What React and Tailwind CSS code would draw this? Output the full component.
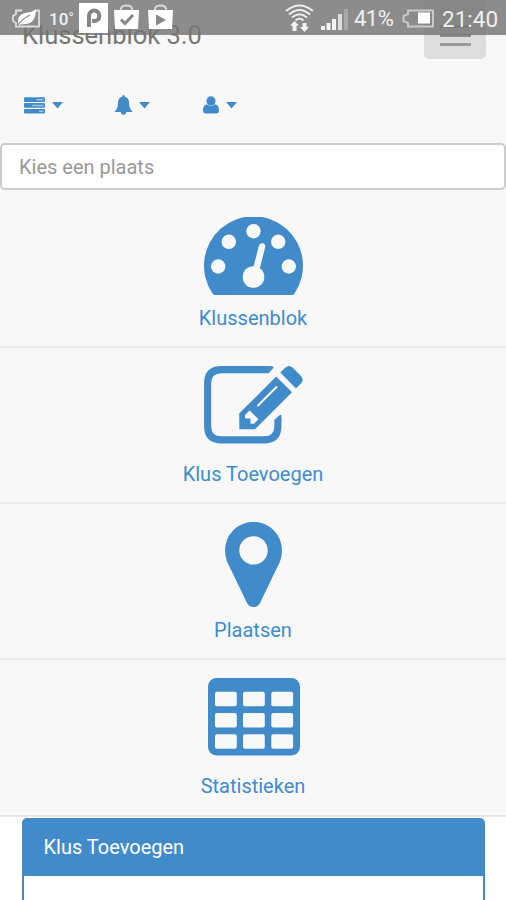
import React from "react";

const menuItems = [
  { label: "Klussenblok", icon: GaugeIcon },
  { label: "Klus Toevoegen", icon: EditIcon },
  { label: "Plaatsen", icon: PinIcon },
  { label: "Statistieken", icon: TableIcon },
];

const dropdowns = [
  { name: "Taken", icon: TasksIcon },
  { name: "Meldingen", icon: BellIcon },
  { name: "Gebruiker", icon: UserIcon },
];

function GaugeIcon() {
  return (
    <svg className="mt-[7px]" width="99" height="78" viewBox="0 0 99 78">
      <path d="M11 78Q9.5 78 8.5 76.5A49.5 49.5 0 1 1 90.5 76.5Q89.5 78 88 78Z" fill="currentColor" />
      <g fill="#f8f8f8">
        <circle cx="14.2" cy="49.5" r="7.2" />
        <circle cx="24.8" cy="24.8" r="7.2" />
        <circle cx="49.5" cy="14.2" r="7.2" />
        <circle cx="74.2" cy="24.8" r="7.2" />
        <circle cx="84.8" cy="49.5" r="7.2" />
        <circle cx="49.5" cy="60" r="10.8" />
      </g>
      <path d="M51 57L58 29.5" stroke="#f8f8f8" strokeWidth="6.5" strokeLinecap="round" />
    </svg>
  );
}

function EditIcon() {
  return (
    <svg width="99" height="78" viewBox="0 0 99 78" fill="none">
      <path
        d="M65 3.6H17.5Q3.6 3.6 3.6 17.5V60Q3.6 73.9 17.5 73.9H60Q73.9 73.9 73.9 60V54"
        stroke="currentColor"
        strokeWidth="7.1"
      />
      <path d="M64 0H66Q71 .4 69 2.5L64.5 7.1H64ZM70.4 55V54L75.5 49.2Q77.5 48 77.5 51V55Z" fill="currentColor" />
      <path d="M35.3 47.3L72.2 10.6L88 26.2L51 63.2H35.3Z" fill="currentColor" />
      <path d="M76.2 6.6L81.2 1.7Q85-1.5 88.8 1.7L97 9.9Q100.2 13.6 97 17.4L92 22.4Z" fill="currentColor" />
      <path d="M41 49L45.5 44.5L54.5 53.2L50 57.8H46.5V52.5H41Z" fill="#f8f8f8" />
      <path d="M54 39.5L72.5 21" stroke="#f8f8f8" strokeWidth="2" strokeLinecap="round" />
    </svg>
  );
}

function PinIcon() {
  return (
    <svg width="57" height="85" viewBox="0 0 57 85">
      <path
        fill="currentColor"
        fillRule="evenodd"
        d="M0 28.3A28.3 28.3 0 0 1 57 28.3Q57 34.5 55 39.5L35 81Q33 85 28.5 85T22 81L2 39.5Q0 34.5 0 28.3ZM28.5 14.2A14.2 14.2 0 1 0 28.5 42.6A14.2 14.2 0 1 0 28.5 14.2Z"
      />
    </svg>
  );
}

function TableIcon() {
  return (
    <svg className="ml-[2px]" width="92" height="78" viewBox="0 0 92 78">
      <rect width="92" height="77.5" rx="8.5" fill="currentColor" />
      {[13.8, 35, 56.2].map((y) =>
        [7, 35, 63.3].map((x) => (
          <rect key={`${x}-${y}`} x={x} y={y} width="21.8" height="14.5" rx="2" fill="#f8f8f8" />
        ))
      )}
    </svg>
  );
}

function TasksIcon() {
  return (
    <svg width="21" height="17" viewBox="0 0 21 17">
      <rect width="21" height="4.7" y=".3" rx="1" fill="currentColor" />
      <rect width="21" height="4.7" y="6.1" rx="1" fill="currentColor" />
      <rect width="21" height="4.7" y="11.9" rx="1" fill="currentColor" />
      <path d="M12.5 2.7H19.5M8 8.4H19.5M15 14.2H19.5" stroke="#9cc4e6" strokeWidth="1.5" />
    </svg>
  );
}

function BellIcon() {
  return (
    <svg width="19" height="20" viewBox="0 0 19 20" fill="currentColor">
      <path d="M9.5 0Q10.8 0 10.8 1.8Q15 3 15 7.5Q15 14 18.8 17H.2Q4 14 4 7.5Q4 3 8.2 1.8Q8.2 0 9.5 0Z" />
      <path d="M6.8 16.5H12.2Q12.2 19.8 9.5 19.8T6.8 16.5Z" />
    </svg>
  );
}

function UserIcon() {
  return (
    <svg width="16" height="18" viewBox="0 0 16 18" fill="currentColor">
      <circle cx="8" cy="4.9" r="4.6" />
      <path d="M3.8 8.2Q8 11.5 12.2 8.2Q16 9 16 14.2Q16 17.5 13 17.5H3Q0 17.5 0 14.2Q0 9 3.8 8.2Z" />
    </svg>
  );
}

function Caret() {
  return (
    <svg width="11" height="7" viewBox="0 0 11 7" fill="currentColor">
      <path d="M0 0H11L5.5 6.5Z" />
    </svg>
  );
}

function BagIcon({ children }) {
  return (
    <svg width="27" height="26" viewBox="0 0 27 26" fill="none">
      <path d="M8 7V5Q8 1.5 13.5 1.5T19 5V7" stroke="#d8d8d8" strokeWidth="2" />
      <path d="M1 6H26L25 25H2Z" fill="#fff" />
      {children}
    </svg>
  );
}

function StatusBar() {
  return (
    <div className="absolute inset-x-0 top-0 flex h-[35px] items-start bg-[#747474]/82 text-[#f0f0f0]">
      <svg className="mt-[9px] ml-3" width="29" height="19" viewBox="0 0 29 19" fill="none">
        <path d="M10 1.5H4V5L1 7V12L4 14V17.5H27V1.5H24" stroke="#dedede" strokeWidth="1.8" />
        <path d="M6 16Q5 5 13 4Q20 3.5 24 0Q24 14 14 15Q10 15 6 16Z" fill="#fff" />
        <path d="M5 17Q10 10 18 6" stroke="#8b8b8b" strokeWidth="1.2" />
      </svg>
      <span className="mt-[9px] ml-[8px] w-[24px] text-[17px] leading-5 font-medium whitespace-nowrap">10˚</span>
      <svg className="mt-[3px] ml-[6px]" width="29" height="30" viewBox="0 0 29 30" fill="none">
        <rect width="29" height="30" fill="#fff" />
        <path d="M10 24V12.8A5.2 5.2 0 1 1 15.2 18H13" stroke="#858585" strokeWidth="4" />
      </svg>
      <div className="mt-[4px] ml-[5px] flex gap-[7px]">
        <BagIcon>
          <path d="M8 15.5L12 19.5L20 11" stroke="#888" strokeWidth="3" />
        </BagIcon>
        <BagIcon>
          <path d="M9 10.5L19 16L9 21.5Z" fill="#888" />
        </BagIcon>
      </div>
      <svg className="mt-[3px] ml-[110px]" width="31" height="30" viewBox="0 0 31 30" fill="none" stroke="#eee">
        <path d="M2 8Q15.500-3 29 8M5 11.500Q15.500 2.500 26 11.500M8 14.500Q15.500 8 23 14.500M11.500 17.500Q15.500 14 19.500 17.500" strokeWidth="2" />
        <path d="M10.500 18L15 22.500H12.500V28H8.500V22.500H6ZM20.500 29L16 24H18.500V20H22.500V24H25Z" fill="#f3f3f3" stroke="none" />
      </svg>
      <svg className="mt-[9px] ml-[6px]" width="28" height="21" viewBox="0 0 28 21" fill="#f3f3f3">
        <path d="M0 17H4V21H0ZM5.500 14H9.500V21H5.500ZM11 10H15V21H11Z" />
        <path d="M17 5H21V21H17Z" fill="#ddd" />
        <path d="M23 0H27V21H23Z" fill="#a8a8a8" />
      </svg>
      <span className="mt-[7px] ml-[5px] w-[43px] text-[22px] leading-6 tracking-tight whitespace-nowrap">41%</span>
      <svg className="mt-[9px] ml-[5px]" width="33" height="19" viewBox="0 0 33 19" fill="none">
        <path d="M6 1.500H31V17.500H6V14L1.500 12V7L6 5Z" stroke="#c9c9c9" strokeWidth="2" />
        <rect x="16" y="3.5" width="12" height="11" fill="#fff" />
      </svg>
      <span className="mt-[7px] ml-[7px] text-[22.5px] leading-6 whitespace-nowrap">21:40</span>
    </div>
  );
}

function App() {
  return (
    <div className="relative h-[900px] w-[506px] overflow-hidden bg-white font-[Roboto,sans-serif] text-[20px] text-[#428bca]">
      <nav className="h-[817px] border-b-2 border-[#e7e7e7] bg-[#f8f8f8]">
        <div className="flex h-[80px] items-start justify-between pr-5 pl-[22px]">
          <span className="mt-[19px] text-[25.5px] leading-8 text-[#777]">Klussenblok 3.0</span>
          <button className="flex h-[59px] w-[62px] flex-col items-center justify-end gap-[6px] rounded-[5px] bg-[#ddd] pb-[13px]">
            <span className="h-[3px] w-[31px] bg-[#999]" />
            <span className="h-[3px] w-[31px] bg-[#888]" />
            <span className="h-[3px] w-[31px] bg-[#999]" />
          </button>
        </div>

        <div className="flex h-[63px] items-start pt-[15px] pl-6">
          {dropdowns.map(({ name, icon: Icon }) => (
            <button key={name} aria-label={name} className="flex h-5 w-[89.500px] items-center gap-[6.5px]">
              <Icon />
              <Caret />
            </button>
          ))}
        </div>

        <input
          type="text"
          placeholder="Kies een plaats"
          className="block h-[47px] w-full rounded-[5px] border-2 border-[#ccc] bg-white px-[17px] text-[20px] placeholder:text-[#999]"
        />

        <ul className="pt-[2px]">
          {menuItems.map(({ label, icon: Icon }) => (
            <li key={label} className="flex h-[156px] flex-col items-center border-b-2 border-[#ebebeb] pt-[18px] last:border-b-0">
              <div className="flex h-[92px] shrink-0 items-start">
                <Icon />
              </div>
              <span className="leading-8">{label}</span>
            </li>
          ))}
        </ul>
      </nav>

      <section className="mx-[21.5px] mt-px h-[100px] rounded-t-[5px] border-2 border-[#428bca]">
        <h3 className="flex h-[56px] items-center bg-[#428bca] px-5 pb-[3px] text-white">Klus Toevoegen</h3>
      </section>

      <StatusBar />
    </div>
  );
}

export default App;
